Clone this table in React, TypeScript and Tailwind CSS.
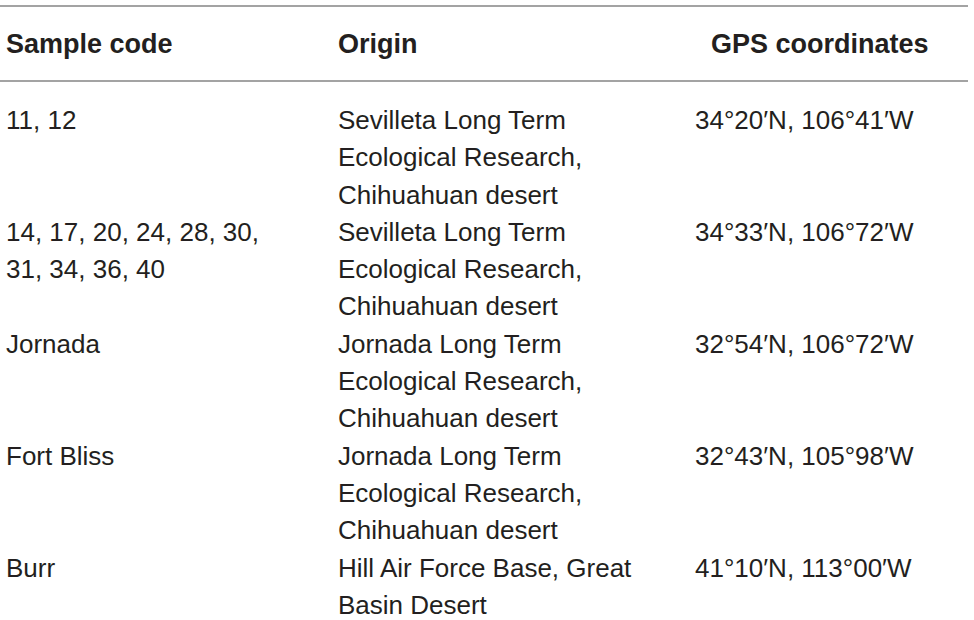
const rows = [
  {
    code: ['11, 12'],
    origin: ['Sevilleta Long Term', 'Ecological Research,', 'Chihuahuan desert'],
    gps: '34°20′N, 106°41′W',
  },
  {
    code: ['14, 17, 20, 24, 28, 30,', '31, 34, 36, 40'],
    origin: ['Sevilleta Long Term', 'Ecological Research,', 'Chihuahuan desert'],
    gps: '34°33′N, 106°72′W',
  },
  {
    code: ['Jornada'],
    origin: ['Jornada Long Term', 'Ecological Research,', 'Chihuahuan desert'],
    gps: '32°54′N, 106°72′W',
  },
  {
    code: ['Fort Bliss'],
    origin: ['Jornada Long Term', 'Ecological Research,', 'Chihuahuan desert'],
    gps: '32°43′N, 105°98′W',
  },
  {
    code: ['Burr'],
    origin: ['Hill Air Force Base, Great', 'Basin Desert'],
    gps: '41°10′N, 113°00′W',
  },
];

export default function App() {
  return (
    <div className="w-[974px] h-[620px] overflow-hidden bg-white text-[#231f20] font-['Liberation_Sans',Arial,sans-serif]">
      <div className="w-[968px] pt-[5px]">
        {/* Header */}
        <div className="border-y-2 border-[#a3a3a3] grid grid-cols-[332px_357px_1fr] pl-[6px] pt-[21px] pb-[20px] text-[27px] leading-[32px] font-bold">
          <div>Sample code</div>
          <div>Origin</div>
          <div className="pl-[16px]">GPS coordinates</div>
        </div>

        {/* Body */}
        <div className="pt-[20px] text-[26px] leading-[37.3px]">
          {rows.map((row, i) => (
            <div key={i} className="grid grid-cols-[332px_357px_1fr] pl-[6px]">
              <div>
                {row.code.map((line) => (
                  <div key={line}>{line}</div>
                ))}
              </div>
              <div>
                {row.origin.map((line) => (
                  <div key={line}>{line}</div>
                ))}
              </div>
              <div>{row.gps}</div>
            </div>
          ))}
        </div>
      </div>
    </div>
  );
}
